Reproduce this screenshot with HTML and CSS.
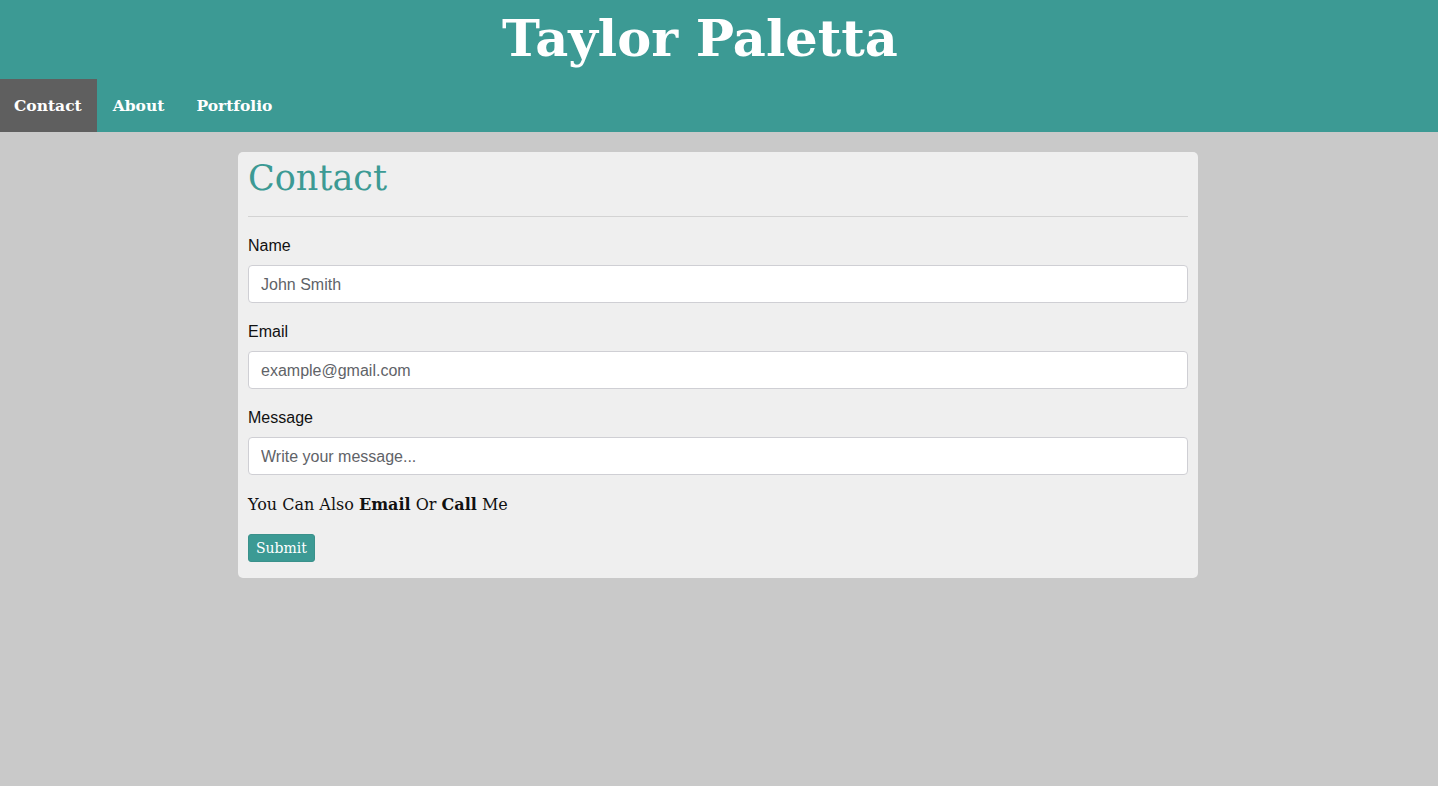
FILE: index.html
```html
<!DOCTYPE html>
<html>
<head>
<meta charset="utf-8">
<title>Taylor Paletta</title>
<link rel="stylesheet" href="styles.css">
</head>
<body>
<header class="site-header">
  <h1 class="site-title">Taylor Paletta</h1>
  <nav class="nav">
    <a class="nav-link active" href="#">Contact</a>
    <a class="nav-link" href="#">About</a>
    <a class="nav-link" href="#">Portfolio</a>
  </nav>
</header>
<main class="main">
  <section class="card">
    <h2 class="card-title">Contact</h2>
    <hr class="rule">
    <form class="form">
      <div class="form-group">
        <label class="label">Name</label>
        <input class="input" type="text" placeholder="John Smith">
      </div>
      <div class="form-group">
        <label class="label">Email</label>
        <input class="input" type="text" placeholder="example@gmail.com">
      </div>
      <div class="form-group">
        <label class="label">Message</label>
        <input class="input" type="text" placeholder="Write your message...">
      </div>
      <p class="also">You Can Also <b>Email</b> Or <b>Call</b> Me</p>
      <button class="btn" type="button">Submit</button>
    </form>
  </section>
</main>
</body>
</html>
```
FILE: styles.css
```css
* { box-sizing: border-box; }
html, body { margin: 0; padding: 0; }
body {
  background: #c9c9c9;
  font-family: "DejaVu Serif", Georgia, serif;
  min-height: 786px;
}
.site-header {
  background: #3c9a94;
  display: flex;
  flex-direction: column;
}
.site-title {
  margin: 0;
  height: 79px;
  color: #fff;
  font-size: 51px;
  font-weight: bold;
  text-align: center;
  line-height: 76px;
  padding-right: 38px;
}
.nav {
  display: flex;
  height: 53px;
}
.nav-link {
  display: flex;
  align-items: center;
  padding: 0 16px;
  color: #fff;
  text-decoration: none;
  font-weight: bold;
  font-size: 15.5px;
}
.nav-link.active {
  background: #5f5f5f;
  padding: 0 15px 0 14px;
}
.main {
  display: flex;
  justify-content: center;
  padding: 20px 2px 0 0;
}
.card {
  width: 960px;
  background: #efefef;
  border-radius: 5px;
  padding: 0 10px 16px;
}
.card-title {
  margin: 0;
  color: #3c9a94;
  font-weight: normal;
  font-size: 35px;
  line-height: 48px;
  padding-top: 2px;
}
.rule {
  margin: 14px 0 16px;
  border: 0;
  border-top: 1px solid #d3d3d3;
}
.form-group { margin-bottom: 16px; }
.label {
  display: block;
  font-family: "Liberation Sans", Arial, sans-serif;
  font-size: 16px;
  line-height: 24px;
  margin-bottom: 8px;
  padding-top: 1px;
  color: #111;
}
.input {
  display: block;
  width: 100%;
  height: 38px;
  margin-top: -1px;
  padding: 7px 12px 5px;
  font-family: "Liberation Sans", Arial, sans-serif;
  font-size: 16px;
  border: 1px solid #cfcfd4;
  border-radius: 4px;
  background: #fff;
  color: #495057;
}
.input::placeholder { color: #5f6368; opacity: 1; }
.also {
  margin: 0 0 16px;
  padding-top: 1px;
  font-size: 16px;
  line-height: 26px;
  color: #111;
}
.btn {
  display: block;
  height: 28px;
  padding: 0 7px;
  background: #3c9a94;
  color: #fff;
  border: 1px solid #3a918b;
  border-radius: 3px;
  font-family: "DejaVu Serif", Georgia, serif;
  font-size: 14px;
}
```
